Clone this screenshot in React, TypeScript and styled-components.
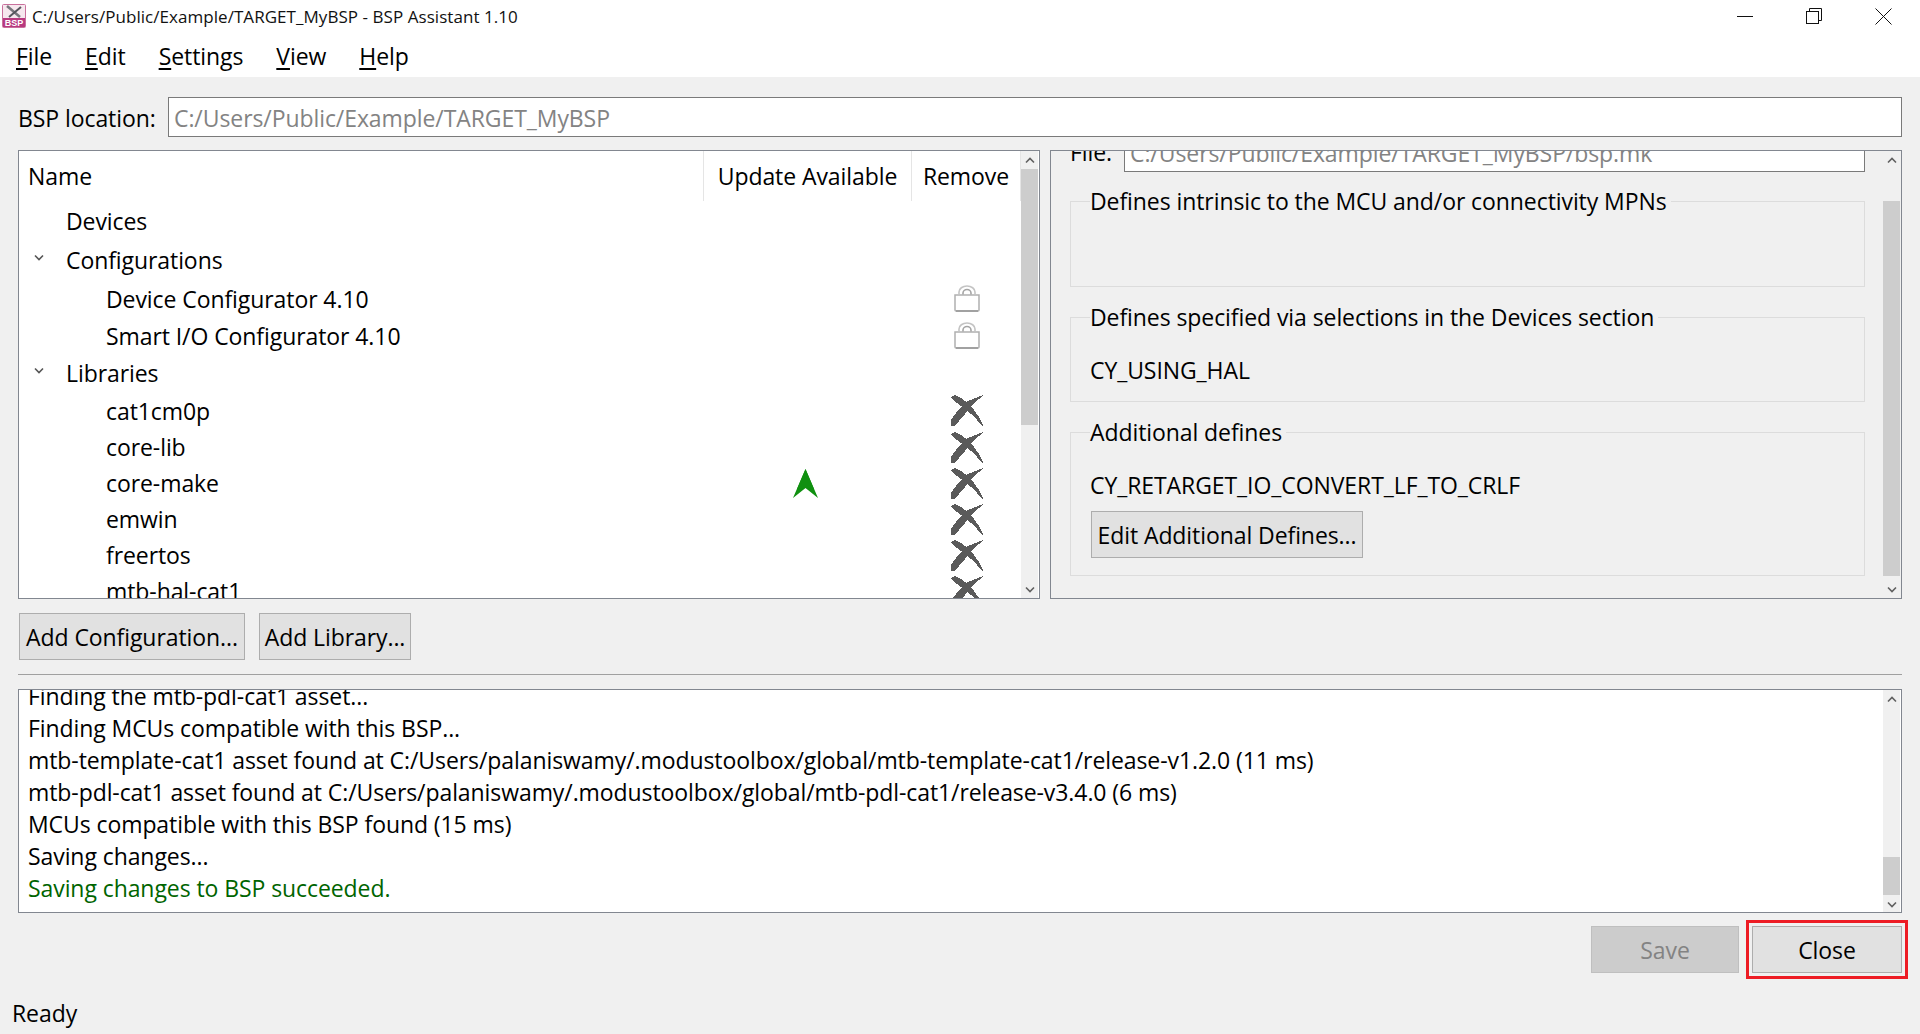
import React from 'react';
import styled, { createGlobalStyle } from 'styled-components';

const FONT = `"Open Sans", "Noto Sans", sans-serif`;
const BODY_SIZE = '23px';

const GlobalStyle = createGlobalStyle`
  html, body { margin: 0; padding: 0; height: 100%; overflow: hidden; background: #f0f0f0; }
  * { box-sizing: border-box; }
  #root { height: 100%; }
`;

const Window = styled.div`
  width: 1920px;
  height: 1034px;
  display: flex;
  flex-direction: column;
  background: #f0f0f0;
  color: #000;
  font-family: ${FONT};
  font-size: ${BODY_SIZE};
  letter-spacing: -0.08px;
`;

const TitleBar = styled.div`
  height: 32px;
  background: #fff;
  display: flex;
  align-items: center;
  padding-left: 2px;
  font-size: 17px;
  letter-spacing: 0.05px;
  color: #111;
`;
const TitleText = styled.span`
  margin-left: 6px;
  padding-top: 1px;
  flex: 1;
`;
const WindowControls = styled.div`
  display: flex;
  align-items: center;
  height: 32px;
  margin-right: 28px;
  gap: 53px;
`;

const MenuBar = styled.div`
  height: 45px;
  background: #fff;
  display: flex;
  align-items: center;
  padding: 3px 0 0 16px;
  gap: 33px;
`;
const MenuItem = styled.span`
  u { text-underline-offset: 3px; text-decoration-thickness: 2px; }
`;

const Main = styled.div`
  padding: 20px 18px 0;
  display: flex;
  flex-direction: column;
`;

const LocationRow = styled.div`
  display: flex;
  align-items: center;
  height: 40px;
`;
const LocationLabel = styled.label`
  width: 150px;
  flex: none;
  padding-top: 2px;
`;
const PathBox = styled.div`
  flex: 1;
  height: 40px;
  background: #fff;
  border: 1px solid #7a7a7a;
  color: #838383;
  display: flex;
  align-items: center;
  padding: 2px 0 0 5px;
`;

const Panels = styled.div`
  margin-top: 13px;
  height: 449px;
  display: grid;
  grid-template-columns: 1022px 852px;
  gap: 10px;
`;
const TreePanel = styled.div`
  background: #fff;
  border: 1px solid #828790;
  display: flex;
  overflow: hidden;
`;
const TreeBody = styled.div`
  width: 1002px;
  flex: none;
  overflow: hidden;
`;
const TreeHeader = styled.div`
  height: 50px;
  display: grid;
  grid-template-columns: 685px 208px 109px;
  align-items: stretch;
`;
const HeaderCell = styled.div<{ $first?: boolean }>`
  display: flex;
  align-items: center;
  justify-content: ${({ $first }) => ($first ? 'flex-start' : 'center')};
  padding-left: ${({ $first }) => ($first ? '9px' : '0')};
  border-right: 1px solid #e5e5e5;
`;
const TreeRow = styled.div<{ $height: number }>`
  height: ${({ $height }) => $height}px;
  display: grid;
  grid-template-columns: 685px 208px 109px;
  align-items: center;
`;
const NameCell = styled.div<{ $indent: number }>`
  display: flex;
  align-items: center;
  padding-left: ${({ $indent }) => $indent}px;
  position: relative;
`;
const Twisty = styled.span`
  position: absolute;
  left: 15px;
  top: 50%;
  margin-top: -6px;
  display: flex;
`;
const IconCell = styled.div<{ $nudge?: number }>`
  display: flex;
  align-items: center;
  justify-content: center;
  height: 100%;
  padding-right: ${({ $nudge }) => $nudge || 0}px;
`;

const ScrollBar = styled.div`
  width: 17px;
  flex: none;
  display: flex;
  flex-direction: column;
  background: #f0f0f0;
  margin: 0 1px 0 0;
`;
const ScrollArrow = styled.div`
  height: 18px;
  flex: none;
  display: flex;
  align-items: center;
  justify-content: center;
`;
const ScrollTrack = styled.div`
  flex: 1;
  display: flex;
  flex-direction: column;
`;
const ScrollThumb = styled.div<{ $top: number; $height: number }>`
  margin-top: ${({ $top }) => $top}px;
  height: ${({ $height }) => $height}px;
  background: #cdcdcd;
`;

const DetailPanel = styled.div`
  border: 1px solid #828790;
  display: flex;
  overflow: hidden;
`;
const DetailBody = styled.div`
  width: 832px;
  flex: none;
  padding: 0 18px 0 19px;
  overflow: hidden;
`;
const FileRow = styled.div`
  margin: -19px 0 -1px;
  height: 40px;
  display: flex;
  align-items: center;
`;
const FileLabel = styled.span`
  width: 54px;
  flex: none;
`;
const FileBox = styled(PathBox)`
  height: 40px;
`;
const Group = styled.fieldset<{ $height: number }>`
  margin: 15px 0 0;
  padding: 0 19px;
  height: ${({ $height }) => $height}px;
  border: 1px solid #dcdcdc;
  min-width: 0;
`;
const GroupTitle = styled.legend`
  padding: 0 4px 0 0;
  line-height: 30px;
`;
const GroupValue = styled.div`
  margin-top: 23px;
  line-height: 30px;
`;

const Button = styled.button<{ $width: number; $disabled?: boolean }>`
  width: ${({ $width }) => $width}px;
  height: 47px;
  padding: 0;
  flex: none;
  font: inherit;
  letter-spacing: inherit;
  background: ${({ $disabled }) => ($disabled ? '#cccccc' : '#e1e1e1')};
  border: 1px solid ${({ $disabled }) => ($disabled ? '#bfbfbf' : '#adadad')};
  color: ${({ $disabled }) => ($disabled ? '#838383' : '#000')};
`;
const EditButton = styled(Button)`
  display: block;
  margin: 11px 0 0 1px;
`;
const CloseButton = styled(Button)`
  outline: 3px solid #ed1c24;
  outline-offset: 3px;
`;

const ActionRow = styled.div`
  margin: 14px 0 0 1px;
  display: flex;
  gap: 14px;
`;
const Divider = styled.div`
  margin-top: 14px;
  height: 1px;
  background: #a0a0a0;
`;

const LogPanel = styled.div`
  margin-top: 14px;
  height: 224px;
  background: #fff;
  border: 1px solid #828790;
  display: flex;
  overflow: hidden;
`;
const LogBody = styled.div`
  flex: 1;
  padding-left: 9px;
  overflow: hidden;
`;
const LogLine = styled.div<{ $ok?: boolean }>`
  height: 32px;
  line-height: 32px;
  white-space: nowrap;
  color: ${({ $ok }) => ($ok ? '#006400' : '#000')};
  &:first-child { margin-top: -10px; }
`;

const FooterRow = styled.div`
  margin-top: 13px;
  display: flex;
  justify-content: flex-end;
  gap: 13px;
`;
const StatusBar = styled.div`
  margin-top: 25px;
  padding-left: 12px;
  line-height: 30px;
`;

const Chevron = ({ down }: { down?: boolean }) => (
  <svg width="10" height="7" viewBox="0 0 10 7">
    <path d={down ? 'M1 1.5 L5 5.5 L9 1.5' : 'M1 5.5 L5 1.5 L9 5.5'} fill="none" stroke="#606060" strokeWidth="1.6" />
  </svg>
);

const VScroll = ({ top, height }: { top: number; height: number }) => (
  <ScrollBar>
    <ScrollArrow><Chevron /></ScrollArrow>
    <ScrollTrack><ScrollThumb $top={top} $height={height} /></ScrollTrack>
    <ScrollArrow><Chevron down /></ScrollArrow>
  </ScrollBar>
);

const AppIcon = () => (
  <svg width="24" height="24" viewBox="0 0 24 24">
    <rect x="0.5" y="0.5" width="23" height="23" rx="1" fill="#f6e8ee" stroke="#c9709c" />
    <path d="M1 14 H23 V23 H1 Z" fill="#b8397f" />
    <path d="M5 2 L18 13" stroke="#77767c" strokeWidth="2.5" />
    <path d="M19 3 L7 13" stroke="#55555c" strokeWidth="2" />
    <text x="12" y="22" textAnchor="middle" fontSize="9" fontWeight="700" fontFamily="Liberation Sans, sans-serif" fill="#fff" letterSpacing="0">BSP</text>
  </svg>
);

const LockIcon = () => (
  <svg width="26" height="27" viewBox="0 0 26 27">
    <path d="M1 10 H25 V25 a1 1 0 0 1 -1 1 H2 a1 1 0 0 1 -1 -1 Z" fill="#fff" stroke="#b0b0b0" strokeWidth="1.5" />
    <path d="M2 26 H24" stroke="#969696" strokeWidth="1.5" />
    <path d="M5 9.5 V7 a8 6 0 0 1 16 0 V9.5" fill="none" stroke="#c4c4c4" strokeWidth="1.6" />
    <path d="M9 9.5 V8 a4 3.5 0 0 1 8 0 V9.5" fill="none" stroke="#a4a4a4" strokeWidth="1.6" />
  </svg>
);

const RemoveIcon = () => (
  <svg width="32" height="31" viewBox="0 0 32 31" shapeRendering="crispEdges">
    <path d="M0 2 L4 0 L10 3 L18 9 L23 15 L28 22 L32 30 L31 31 L26 25 L20 19 L13 13 L6 8 L2 5 Z" fill="#5a5a5a" />
    <path d="M32 0 L31 2 L24 7 L19 12 L14 19 L8 26 L3 31 L0 31 L0 25 L5 18 L10 12 L15 7 L22 4 Z" fill="#5a5a5a" />
  </svg>
);

const UpdateIcon = () => (
  <svg width="25" height="29" viewBox="0 0 25 29">
    <path d="M12.5 0 L25 29 L12.5 19 L0 29 Z" fill="#109010" />
    <path d="M12.5 0 L21 20 L12.5 19 L4 20 Z" fill="#109010" />
  </svg>
);

const TwistyIcon = () => (
  <svg width="10" height="8" viewBox="0 0 10 8">
    <path d="M1 1.5 L5 5.5 L9 1.5" fill="none" stroke="#555" strokeWidth="1.6" />
  </svg>
);

type Row = { name: string; height: number; indent: number; twisty?: boolean; lock?: boolean; remove?: boolean; update?: boolean };

const rows: Row[] = [
  { name: 'Devices', height: 39, indent: 47 },
  { name: 'Configurations', height: 40, indent: 47, twisty: true },
  { name: 'Device Configurator 4.10', height: 37, indent: 87, lock: true },
  { name: 'Smart I/O Configurator 4.10', height: 37, indent: 87, lock: true },
  { name: 'Libraries', height: 38, indent: 47, twisty: true },
  { name: 'cat1cm0p', height: 37, indent: 87, remove: true },
  { name: 'core-lib', height: 36, indent: 87, remove: true },
  { name: 'core-make', height: 36, indent: 87, remove: true, update: true },
  { name: 'emwin', height: 36, indent: 87, remove: true },
  { name: 'freertos', height: 36, indent: 87, remove: true },
  { name: 'mtb-hal-cat1', height: 36, indent: 87, remove: true },
];

const logLines = [
  'Finding the mtb-pdl-cat1 asset...',
  'Finding MCUs compatible with this BSP...',
  'mtb-template-cat1 asset found at C:/Users/palaniswamy/.modustoolbox/global/mtb-template-cat1/release-v1.2.0 (11 ms)',
  'mtb-pdl-cat1 asset found at C:/Users/palaniswamy/.modustoolbox/global/mtb-pdl-cat1/release-v3.4.0 (6 ms)',
  'MCUs compatible with this BSP found (15 ms)',
  'Saving changes...',
];

const App = () => (
  <Window>
    <GlobalStyle />
    <TitleBar>
      <AppIcon />
      <TitleText>C:/Users/Public/Example/TARGET_MyBSP - BSP Assistant 1.10</TitleText>
      <WindowControls>
        <svg width="16" height="16" viewBox="0 0 16 16"><path d="M0 8.5 H16" stroke="#111" /></svg>
        <svg width="16" height="16" viewBox="0 0 16 16" fill="none" stroke="#111">
          <rect x="0.5" y="3.5" width="12" height="12" />
          <path d="M3.5 3.5 V0.5 H15.5 V12.5 H12.5" />
        </svg>
        <svg width="17" height="17" viewBox="0 0 17 17"><path d="M0.5 0.5 L16.5 16.5 M16.5 0.5 L0.5 16.5" stroke="#111" /></svg>
      </WindowControls>
    </TitleBar>
    <MenuBar>
      <MenuItem><u>F</u>ile</MenuItem>
      <MenuItem><u>E</u>dit</MenuItem>
      <MenuItem><u>S</u>ettings</MenuItem>
      <MenuItem><u>V</u>iew</MenuItem>
      <MenuItem><u>H</u>elp</MenuItem>
    </MenuBar>
    <Main>
      <LocationRow>
        <LocationLabel>BSP location:</LocationLabel>
        <PathBox>C:/Users/Public/Example/TARGET_MyBSP</PathBox>
      </LocationRow>
      <Panels>
        <TreePanel>
          <TreeBody>
            <TreeHeader>
              <HeaderCell $first>Name</HeaderCell>
              <HeaderCell>Update Available</HeaderCell>
              <HeaderCell>Remove</HeaderCell>
            </TreeHeader>
            {rows.map((row) => (
              <TreeRow key={row.name} $height={row.height}>
                <NameCell $indent={row.indent}>
                  {row.twisty && <Twisty><TwistyIcon /></Twisty>}
                  {row.name}
                </NameCell>
                <IconCell $nudge={6}>{row.update && <UpdateIcon />}</IconCell>
                <IconCell>
                  {row.lock && <LockIcon />}
                  {row.remove && <RemoveIcon />}
                </IconCell>
              </TreeRow>
            ))}
          </TreeBody>
          <VScroll top={0} height={256} />
        </TreePanel>
        <DetailPanel>
          <DetailBody>
            <FileRow>
              <FileLabel>File:</FileLabel>
              <FileBox>C:/Users/Public/Example/TARGET_MyBSP/bsp.mk</FileBox>
            </FileRow>
            <Group $height={101}>
              <GroupTitle>Defines intrinsic to the MCU and/or connectivity MPNs</GroupTitle>
            </Group>
            <Group $height={100}>
              <GroupTitle>Defines specified via selections in the Devices section</GroupTitle>
              <GroupValue>CY_USING_HAL</GroupValue>
            </Group>
            <Group $height={159}>
              <GroupTitle>Additional defines</GroupTitle>
              <GroupValue>CY_RETARGET_IO_CONVERT_LF_TO_CRLF</GroupValue>
              <EditButton $width={272}>Edit Additional Defines...</EditButton>
            </Group>
          </DetailBody>
          <VScroll top={32} height={375} />
        </DetailPanel>
      </Panels>
      <ActionRow>
        <Button $width={226}>Add Configuration...</Button>
        <Button $width={152}>Add Library...</Button>
      </ActionRow>
      <Divider />
      <LogPanel>
        <LogBody>
          {logLines.map((line) => (
            <LogLine key={line}>{line}</LogLine>
          ))}
          <LogLine $ok>Saving changes to BSP succeeded.</LogLine>
        </LogBody>
        <VScroll top={149} height={38} />
      </LogPanel>
      <FooterRow>
        <Button $width={148} $disabled>Save</Button>
        <CloseButton $width={150}>Close</CloseButton>
      </FooterRow>
    </Main>
    <StatusBar>Ready</StatusBar>
  </Window>
);

export default App;
